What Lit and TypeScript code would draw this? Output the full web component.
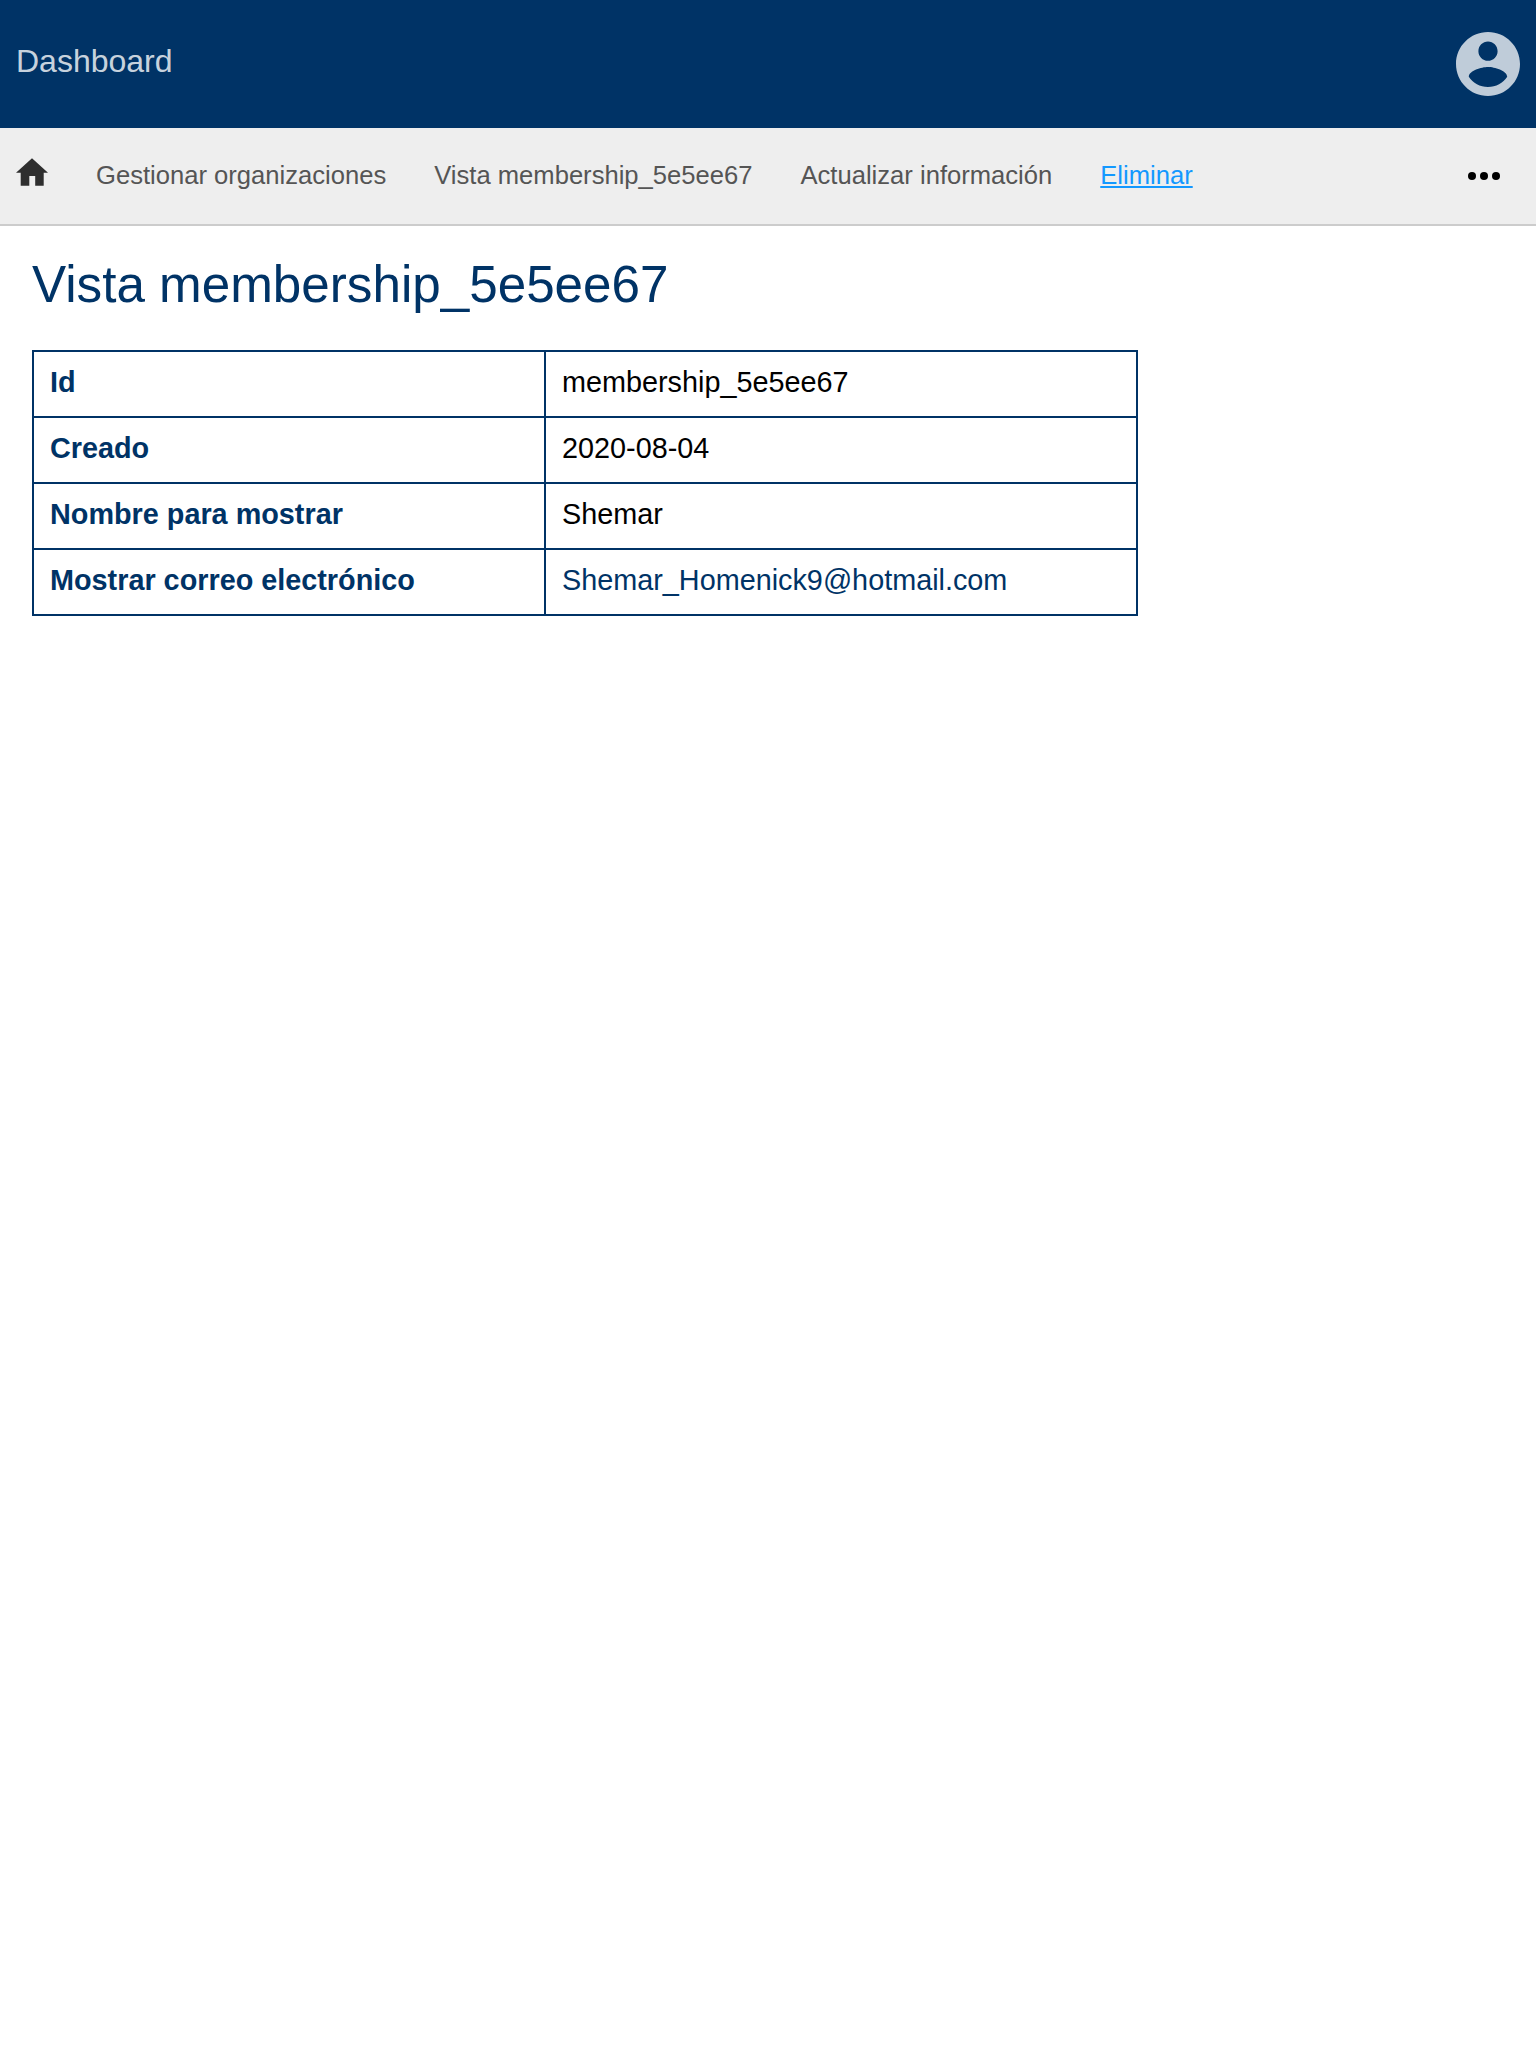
import { LitElement, html, css } from "lit";
import { customElement } from "lit/decorators.js";

@customElement("app-root")
class AppRoot extends LitElement {
  static styles = css`
    :host { display: block; min-height: 2048px; background: #fff; font-family: "Liberation Sans", Arial, sans-serif; color: #000; }
    * { box-sizing: border-box; }
    svg { display: block; }
    .header { height: 128px; padding: 0 16px; background: #003366; display: flex; justify-content: space-between; align-items: center; }
    .brand { font-size: 32px; line-height: 36px; color: rgba(255,255,255,.8); padding-bottom: 6px; }
    .account { width: 64px; height: 64px; overflow: hidden; }
    .nav { height: 98px; padding: 0 32px 0 16px; background: #eee; border-bottom: 2px solid #ccc; display: flex; align-items: center; font-size: 25.6px; line-height: 32px; color: #555; }
    .home { margin-right: 48px; padding-bottom: 8px; }
    .link { margin-right: 48px; white-space: nowrap; padding-bottom: 2px; }
    .active { color: #1398ff; text-decoration: underline; }
    .more { margin-left: auto; }
    .main { padding: 28px 32px; }
    h1 { margin: 0 0 35px; font-size: 51.2px; line-height: 61px; font-weight: 400; color: #003366; }
    table { border-collapse: collapse; width: 1106px; table-layout: fixed; font-size: 28.8px; line-height: 32px; }
    td, th { border: 2px solid #003366; height: 66px; padding: 0 16px 4px; text-align: left; }
    th { width: 512px; color: #003366; }
    .mail { color: #003366; }
  `;
  render() {
    const rows = [
      ["Id", "membership_5e5ee67"],
      ["Creado", "2020-08-04"],
      ["Nombre para mostrar", "Shemar"],
      ["Mostrar correo electrónico", "Shemar_Homenick9@hotmail.com"],
    ];
    return html`
      <header class="header">
        <span class="brand">Dashboard</span>
        <svg class="account" viewBox="2 2 20 20" fill="#bfccd9"><path d="M12 2C6.48 2 2 6.48 2 12s4.480 10 10 10 10-4.480 10-10S17.520 2 12 2zm0 3c1.660 0 3 1.340 3 3s-1.340 3-3 3-3-1.340-3-3 1.340-3 3-3zm0 14.200c-2.500 0-4.710-1.280-6-3.220.030-1.990 4-3.080 6-3.080 1.990 0 5.970 1.090 6 3.080-1.290 1.940-3.500 3.220-6 3.220z"/></svg>
      </header>
      <nav class="nav">
        <span class="home"><svg width="32" height="28" viewBox="0 0 32 28" fill="#2e2e2e"><path d="M16 .3L32 14.700H27.700V27.700H19.200V18H13.300V27.700H4.700V14.700H0z"/></svg></span>
        <span class="link">Gestionar organizaciones</span>
        <span class="link">Vista membership_5e5ee67</span>
        <span class="link">Actualizar información</span>
        <span class="link active">Eliminar</span>
        <svg class="more" width="40" height="10" viewBox="0 0 40 10"><circle cx="8" cy="5" r="4"/><circle cx="20" cy="5" r="4"/><circle cx="32" cy="5" r="4"/></svg>
      </nav>
      <main class="main">
        <h1>Vista membership_5e5ee67</h1>
        <table><tbody>
          ${rows.map(([k, v]) => html`<tr><th>${k}</th><td class=${v.includes("@") ? "mail" : ""}>${v}</td></tr>`)}
        </tbody></table>
      </main>`;
  }
}
